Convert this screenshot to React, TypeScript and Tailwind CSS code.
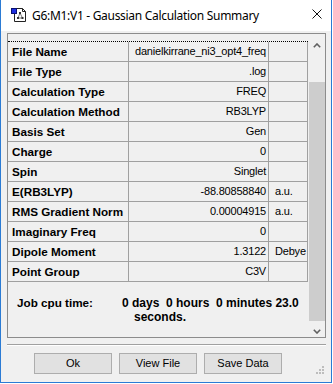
import React from 'react';

const ROWS: [string, string, string][] = [
  ['File Name', 'danielkirrane_ni3_opt4_freq', ''],
  ['File Type', '.log', ''],
  ['Calculation Type', 'FREQ', ''],
  ['Calculation Method', 'RB3LYP', ''],
  ['Basis Set', 'Gen', ''],
  ['Charge', '0', ''],
  ['Spin', 'Singlet', ''],
  ['E(RB3LYP)', '-88.80858840', 'a.u.'],
  ['RMS Gradient Norm', '0.00004915', 'a.u.'],
  ['Imaginary Freq', '0', ''],
  ['Dipole Moment', '1.3122', 'Debye'],
  ['Point Group', 'C3V', ''],
];

function AppIcon() {
  return (
    <svg width="16" height="16" viewBox="0 0 16 16" className="ml-[10px] mt-[7px] shrink-0 self-start">
      <path d="M3.5 1.5 H11.5 L14.5 4.5 V14.5 H3.5 Z" fill="#fff" stroke="#222" />
      <path d="M11.5 1.5 V4.5 H14.5" fill="none" stroke="#222" />
      <rect x="0.5" y="1.5" width="5" height="5" fill="#1d2fe0" stroke="#0b1170" />
      <path d="M9 6 L7 11 M9 6 L11.5 11 M7 11 H11.5" stroke="#777" strokeWidth="1" fill="none" />
      <rect x="8" y="5" width="2" height="2" fill="#333" />
      <rect x="6" y="10" width="2" height="2" fill="#333" />
      <rect x="10.5" y="10" width="2" height="2" fill="#333" />
    </svg>
  );
}

function Chevron({ down }: { down?: boolean }) {
  return (
    <svg width="8" height="5" viewBox="0 0 8 5">
      <path
        d={down ? 'M0.8 0.8 L4 4 L7.2 0.8' : 'M0.8 4.2 L4 1 L7.2 4.2'}
        fill="none"
        stroke="#606060"
        strokeWidth="1.6"
      />
    </svg>
  );
}

export default function App() {
  return (
    <div className="h-[384px] w-[333px] bg-white">
      <div className="flex h-[383px] w-[332px] flex-col border-x border-b border-[#2b7bd4] bg-[#f0f0f0] font-['Liberation_Sans',Arial,sans-serif] text-black">
        {/* Title bar */}
        <div className="flex h-[31px] shrink-0 items-center bg-white">
          <AppIcon />
          <span className="ml-[5px] font-['Noto_Sans',sans-serif] text-[12px] tracking-[-0.3px] text-black">
            G6:M1:V1 - Gaussian Calculation Summary
          </span>
          <svg width="10" height="10" viewBox="0 0 10 10" className="ml-auto mr-[9px] mt-[9px] self-start">
            <path d="M0.5 0.5 L9.5 9.5 M9.5 0.5 L0.5 9.5" stroke="#111" strokeWidth="1" />
          </svg>
        </div>

        <div className="flex flex-1 flex-col pl-[6px] pr-[5px]">
          {/* List box */}
          <div className="mt-[2px] flex h-[305px] border border-[#8c8c8c]">
            <div className="flex w-[301px] flex-col pt-[7px]">
              <div className="w-[300px] border-t border-dotted border-black" />
              {ROWS.map(([label, value, unit]) => (
                <div key={label} className="flex h-[20px] w-[300px] border-b border-[#a0a0a0]">
                  <div className="flex w-[121px] items-center border-r border-[#a0a0a0] pl-[4px] text-[11.7px] font-bold">
                    {label}
                  </div>
                  <div className="flex w-[140px] items-center justify-end border-r border-[#a0a0a0] pr-[2px] text-[11px] tracking-[-0.2px]">
                    {value}
                  </div>
                  <div className="flex w-[39px] items-center border-r border-[#a0a0a0] pl-[6px] text-[11px] tracking-[-0.2px]">
                    {unit}
                  </div>
                </div>
              ))}
              <div className="flex pt-[14px] pl-[9px] text-[11.7px] font-bold leading-[14px]">
                <div className="w-[105px]">Job cpu time:</div>
                <div className="text-[12px]">
                  <div className="whitespace-pre">0 days  0 hours  0 minutes 23.0</div>
                  <div className="ml-[12px]">seconds.</div>
                </div>
              </div>
            </div>
            {/* Scrollbar */}
            <div className="flex w-[16px] flex-col">
              <div className="flex h-[17px] justify-center pt-[9px]">
                <Chevron />
              </div>
              <div className="flex flex-1 flex-col pt-[31px]">
                <div className="flex-1 bg-[#cdcdcd]" />
              </div>
              <div className="flex h-[16px] justify-center pt-[8px]">
                <Chevron down />
              </div>
            </div>
          </div>

          {/* Separator */}
          <div className="mt-[6px] border-t border-b border-t-[#a0a0a0] border-b-white" />

          {/* Buttons */}
          <div className="mt-[7px] flex gap-[7px] pl-[27px]">
            {['Ok', 'View File', 'Save Data'].map((b) => (
              <button
                key={b}
                className="flex h-[21px] w-[78px] items-center justify-center border border-[#adadad] bg-[#e1e1e1] text-[11px] text-black"
              >
                {b}
              </button>
            ))}
            <svg width="8" height="8" viewBox="0 0 8 8" className="ml-auto mr-[2px] mt-[13px]">
              <rect x="6" y="0" width="2" height="2" fill="#bdbdbd" />
              <rect x="3" y="3" width="2" height="2" fill="#bdbdbd" />
              <rect x="6" y="3" width="2" height="2" fill="#bdbdbd" />
              <rect x="0" y="6" width="2" height="2" fill="#bdbdbd" />
              <rect x="3" y="6" width="2" height="2" fill="#bdbdbd" />
              <rect x="6" y="6" width="2" height="2" fill="#bdbdbd" />
            </svg>
          </div>
        </div>
      </div>
    </div>
  );
}
